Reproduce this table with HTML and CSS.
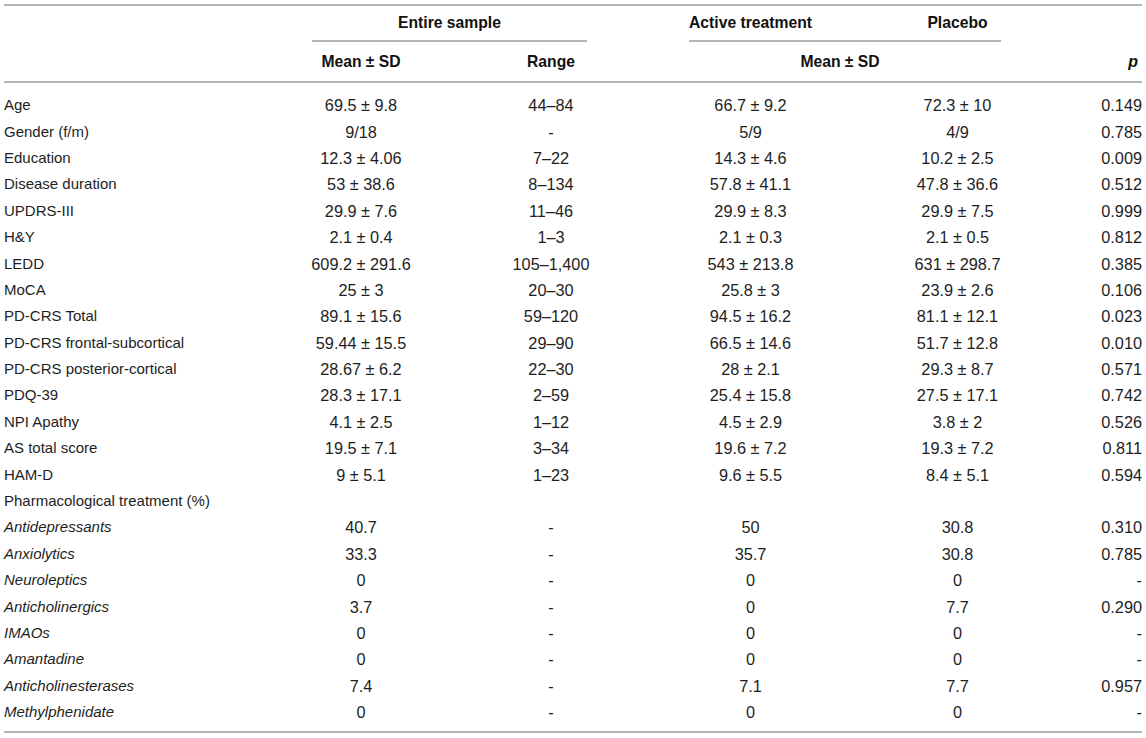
FILE: index.html
```html
<!DOCTYPE html>
<html lang="en">
<head>
<meta charset="utf-8">
<title>Table</title>
<link rel="stylesheet" href="styles.css">
</head>
<body>
<div class="table">
  <div class="thead">
    <div class="hrow hrow-top">
      <div class="h-entire">Entire sample</div>
      <div class="h-group">
        <span class="h-active">Active treatment</span>
        <span class="h-placebo">Placebo</span>
      </div>
    </div>
    <div class="hrow hrow-sub">
      <div class="c1">Mean ± SD</div>
      <div class="c2">Range</div>
      <div class="h-msd">Mean ± SD</div>
      <div class="cp"><i>p</i></div>
    </div>
  </div>
  <div class="tbody">
    <div class="row"><div class="lbl">Age</div><div class="c1">69.5 ± 9.8</div><div class="c2">44–84</div><div class="ca">66.7 ± 9.2</div><div class="cb">72.3 ± 10</div><div class="cp">0.149</div></div>
    <div class="row"><div class="lbl">Gender (f/m)</div><div class="c1">9/18</div><div class="c2">-</div><div class="ca">5/9</div><div class="cb">4/9</div><div class="cp">0.785</div></div>
    <div class="row"><div class="lbl">Education</div><div class="c1">12.3 ± 4.06</div><div class="c2">7–22</div><div class="ca">14.3 ± 4.6</div><div class="cb">10.2 ± 2.5</div><div class="cp">0.009</div></div>
    <div class="row"><div class="lbl">Disease duration</div><div class="c1">53 ± 38.6</div><div class="c2">8–134</div><div class="ca">57.8 ± 41.1</div><div class="cb">47.8 ± 36.6</div><div class="cp">0.512</div></div>
    <div class="row"><div class="lbl">UPDRS-III</div><div class="c1">29.9 ± 7.6</div><div class="c2">11–46</div><div class="ca">29.9 ± 8.3</div><div class="cb">29.9 ± 7.5</div><div class="cp">0.999</div></div>
    <div class="row"><div class="lbl">H&amp;Y</div><div class="c1">2.1 ± 0.4</div><div class="c2">1–3</div><div class="ca">2.1 ± 0.3</div><div class="cb">2.1 ± 0.5</div><div class="cp">0.812</div></div>
    <div class="row"><div class="lbl">LEDD</div><div class="c1">609.2 ± 291.6</div><div class="c2">105–1,400</div><div class="ca">543 ± 213.8</div><div class="cb">631 ± 298.7</div><div class="cp">0.385</div></div>
    <div class="row"><div class="lbl">MoCA</div><div class="c1">25 ± 3</div><div class="c2">20–30</div><div class="ca">25.8 ± 3</div><div class="cb">23.9 ± 2.6</div><div class="cp">0.106</div></div>
    <div class="row"><div class="lbl">PD-CRS Total</div><div class="c1">89.1 ± 15.6</div><div class="c2">59–120</div><div class="ca">94.5 ± 16.2</div><div class="cb">81.1 ± 12.1</div><div class="cp">0.023</div></div>
    <div class="row"><div class="lbl">PD-CRS frontal-subcortical</div><div class="c1">59.44 ± 15.5</div><div class="c2">29–90</div><div class="ca">66.5 ± 14.6</div><div class="cb">51.7 ± 12.8</div><div class="cp">0.010</div></div>
    <div class="row"><div class="lbl">PD-CRS posterior-cortical</div><div class="c1">28.67 ± 6.2</div><div class="c2">22–30</div><div class="ca">28 ± 2.1</div><div class="cb">29.3 ± 8.7</div><div class="cp">0.571</div></div>
    <div class="row"><div class="lbl">PDQ-39</div><div class="c1">28.3 ± 17.1</div><div class="c2">2–59</div><div class="ca">25.4 ± 15.8</div><div class="cb">27.5 ± 17.1</div><div class="cp">0.742</div></div>
    <div class="row"><div class="lbl">NPI Apathy</div><div class="c1">4.1 ± 2.5</div><div class="c2">1–12</div><div class="ca">4.5 ± 2.9</div><div class="cb">3.8 ± 2</div><div class="cp">0.526</div></div>
    <div class="row"><div class="lbl">AS total score</div><div class="c1">19.5 ± 7.1</div><div class="c2">3–34</div><div class="ca">19.6 ± 7.2</div><div class="cb">19.3 ± 7.2</div><div class="cp">0.811</div></div>
    <div class="row"><div class="lbl">HAM-D</div><div class="c1">9 ± 5.1</div><div class="c2">1–23</div><div class="ca">9.6 ± 5.5</div><div class="cb">8.4 ± 5.1</div><div class="cp">0.594</div></div>
    <div class="row"><div class="lbl">Pharmacological treatment (%)</div></div>
    <div class="row"><div class="lbl it">Antidepressants</div><div class="c1">40.7</div><div class="c2">-</div><div class="ca">50</div><div class="cb">30.8</div><div class="cp">0.310</div></div>
    <div class="row"><div class="lbl it">Anxiolytics</div><div class="c1">33.3</div><div class="c2">-</div><div class="ca">35.7</div><div class="cb">30.8</div><div class="cp">0.785</div></div>
    <div class="row"><div class="lbl it">Neuroleptics</div><div class="c1">0</div><div class="c2">-</div><div class="ca">0</div><div class="cb">0</div><div class="cp">-</div></div>
    <div class="row"><div class="lbl it">Anticholinergics</div><div class="c1">3.7</div><div class="c2">-</div><div class="ca">0</div><div class="cb">7.7</div><div class="cp">0.290</div></div>
    <div class="row"><div class="lbl it">IMAOs</div><div class="c1">0</div><div class="c2">-</div><div class="ca">0</div><div class="cb">0</div><div class="cp">-</div></div>
    <div class="row"><div class="lbl it">Amantadine</div><div class="c1">0</div><div class="c2">-</div><div class="ca">0</div><div class="cb">0</div><div class="cp">-</div></div>
    <div class="row"><div class="lbl it">Anticholinesterases</div><div class="c1">7.4</div><div class="c2">-</div><div class="ca">7.1</div><div class="cb">7.7</div><div class="cp">0.957</div></div>
    <div class="row"><div class="lbl it">Methylphenidate</div><div class="c1">0</div><div class="c2">-</div><div class="ca">0</div><div class="cb">0</div><div class="cp">-</div></div>
  </div>
</div>
</body>
</html>
```

FILE: styles.css
```css
html, body {
  margin: 0;
  padding: 0;
  background: #ffffff;
}

body {
  font-family: "Liberation Sans", Arial, sans-serif;
  color: #1e1e1e;
}

.table {
  --cols: 308px 98px 104px 74px 101px 123px 102px 87px 141px;
  margin: 4px 4px 0 4px;
  width: 1138px;
  border-top: 2px solid #b4b4b4;
  border-bottom: 2px solid #b4b4b4;
}

.thead {
  border-bottom: 2px solid #b4b4b4;
}

.hrow {
  display: grid;
  grid-template-columns: var(--cols);
  font-weight: bold;
  font-size: 15.7px;
  color: #111;
}

.hrow-top {
  height: 34px;
  align-items: stretch;
}

.h-entire {
  grid-column: 2 / 5;
  border-bottom: 2px solid #b4b4b4;
  text-align: center;
  line-height: 34px;
  margin-right: 1px;
}

.h-group {
  grid-column: 6 / 9;
  display: grid;
  grid-template-columns: 123px 102px 87px;
  border-bottom: 2px solid #b4b4b4;
  line-height: 34px;
}

.h-active {
  grid-column: 1;
  text-align: center;
  white-space: nowrap;
}

.h-placebo {
  grid-column: 3;
  text-align: center;
}

.hrow-sub {
  height: 39px;
  padding-top: 2px;
  align-items: center;
  line-height: 20px;
}

.hrow-sub .c1 { grid-column: 2; }
.hrow-sub .c2 { grid-column: 4; }

.h-msd {
  grid-column: 6 / 9;
  text-align: center;
  padding-right: 10px;
}

.hrow-sub .cp {
  grid-column: 9;
  text-align: right;
  padding-right: 4px;
  font-size: 16px;
}

.tbody {
  padding-top: 9px;
  padding-bottom: 6px;
}

.row {
  display: grid;
  grid-template-columns: var(--cols);
  height: 26.4px;
  align-items: center;
  font-size: 16.3px;
  white-space: nowrap;
}

.row > div {
  line-height: 20px;
}

.lbl {
  grid-column: 1;
  font-size: 15px;
  padding-left: 0;
}

.it {
  font-style: italic;
}

.c1, .c2, .ca, .cb {
  justify-self: center;
  text-align: center;
}

.c1 { grid-column: 2; }
.c2 { grid-column: 4; }
.ca { grid-column: 6; }
.cb { grid-column: 8; }

.cp {
  grid-column: 9;
  justify-self: end;
  text-align: right;
}
```
